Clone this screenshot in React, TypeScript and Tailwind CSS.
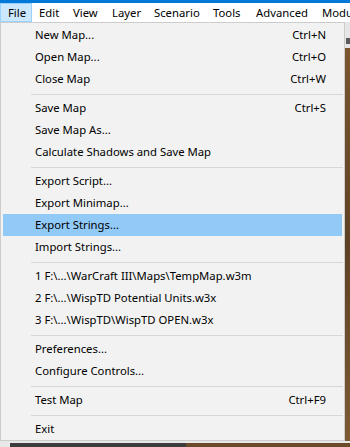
import React from 'react';

type Item = { label: string; shortcut?: string; active?: boolean } | 'sep';

const menuBar = [
  { label: 'File', w: 'w-[32px]', open: true },
  { label: 'Edit', w: 'w-[34px]' },
  { label: 'View', w: 'w-[39px]' },
  { label: 'Layer', w: 'w-[42px]' },
  { label: 'Scenario', w: 'w-[59px]' },
  { label: 'Tools', w: 'w-[43px]' },
  { label: 'Advanced', w: 'w-[66px]' },
  { label: 'Module', w: 'w-[40px]' },
];

const items: Item[] = [
  { label: 'New Map...', shortcut: 'Ctrl+N' },
  { label: 'Open Map...', shortcut: 'Ctrl+O' },
  { label: 'Close Map', shortcut: 'Ctrl+W' },
  'sep',
  { label: 'Save Map', shortcut: 'Ctrl+S' },
  { label: 'Save Map As...' },
  { label: 'Calculate Shadows and Save Map' },
  'sep',
  { label: 'Export Script...' },
  { label: 'Export Minimap...' },
  { label: 'Export Strings...', active: true },
  { label: 'Import Strings...' },
  'sep',
  { label: '1 F:\\...\\WarCraft III\\Maps\\TempMap.w3m' },
  { label: '2 F:\\...\\WispTD Potential Units.w3x' },
  { label: '3 F:\\...\\WispTD\\WispTD OPEN.w3x' },
  'sep',
  { label: 'Preferences...' },
  { label: 'Configure Controls...' },
  'sep',
  { label: 'Test Map', shortcut: 'Ctrl+F9' },
  'sep',
  { label: 'Exit' },
];

function MenuRow({ label, shortcut, active }: { label: string; shortcut?: string; active?: boolean }) {
  return (
    <div
      className={`mx-[2px] h-[22px] pl-[32px] pr-[16px] flex items-center justify-between ${
        active ? 'bg-[#91c9f7]' : ''
      }`}
    >
      <span>{label}</span>
      {shortcut && <span>{shortcut}</span>}
    </div>
  );
}

export default function App() {
  return (
    <div
      className="w-[350px] h-[447px] overflow-hidden flex flex-col bg-[#6b4a2a] text-black text-[11.3px] leading-none"
      style={{ fontFamily: '"Noto Sans", "Segoe UI", sans-serif' }}
    >
      <div className="h-[3px] bg-[#0078d7] shrink-0" />
      <div className="h-[19px] bg-white flex shrink-0 whitespace-nowrap overflow-hidden">
        {menuBar.map((m) => (
          <div
            key={m.label}
            className={`${m.w} shrink-0 pl-[7px] flex items-center ${
              m.open ? 'bg-[#cce8ff] border border-[#99d1ff] pl-[6px]' : ''
            }`}
          >
            {m.label}
          </div>
        ))}
      </div>
      <div className="flex h-[419px] shrink-0">
        <div className="w-[345px] shrink-0 border border-[#cccccc] bg-[#f2f2f2] pt-[1px] whitespace-nowrap">
          {items.map((it, i) =>
            it === 'sep' ? (
              <div key={i} className="h-[7px] pt-[4px] ml-[30px] mr-[1px]">
                <div className="h-px bg-[#d7d7d7]" />
              </div>
            ) : (
              <MenuRow key={i} {...it} />
            ),
          )}
        </div>
        <div className="flex-1 flex flex-col">
          <div className="h-[26px] bg-[#e6e6e6] flex items-end justify-center pb-[4px]">
            <div className="w-[4px] h-[6px] bg-[#5a5a5a]" />
          </div>
          <div className="flex-1 bg-gradient-to-b from-[#7a5630] via-[#5e4124] to-[#7d5a34]" />
        </div>
      </div>
      <div className="flex-1 flex flex-col">
        <div className="h-[2px] bg-[#e8e8e8]" />
        <div className="flex-1 flex">
          <div className="w-[10px] bg-[#e8e8e8]" />
          <div className="w-[176px] bg-[#3c3c3c]" />
          <div className="flex-1 bg-[#6b4a2a]" />
        </div>
      </div>
    </div>
  );
}
